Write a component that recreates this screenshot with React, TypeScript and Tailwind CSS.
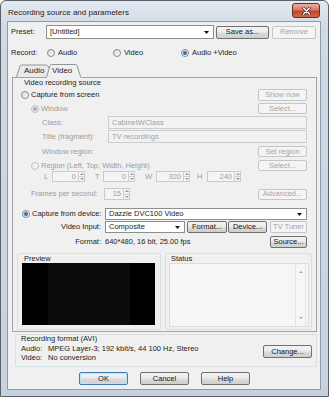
import type { ReactNode } from "react"

const btnFace = "border-[#707070] bg-[linear-gradient(#f3f3f3,#ebebeb_48%,#dcdcdc_52%,#cfcfcf)] text-[#151515]"

function Btn({ w, h = "h-[13px]", children, disabled = false, def = false }: { w: string; h?: string; children: ReactNode; disabled?: boolean; def?: boolean }) {
  let look = btnFace
  if (disabled) look = "border-[#c3c6c9] bg-[#f4f4f4] text-[#a6a6a6]"
  if (def) look = "border-[#3c7fb1] bg-[linear-gradient(#f3f3f3,#ebebeb_48%,#dcdcdc_52%,#cfcfcf)] text-[#151515] shadow-[inset_0_0_0_1px_#bfe3f7]"
  return (
    <div className={`${w} ${h} shrink-0 flex items-center justify-center rounded-[2px] border leading-none ${look}`}>
      {children}
    </div>
  )
}

function Radio({ checked = false, disabled = false }: { checked?: boolean; disabled?: boolean }) {
  return (
    <span
      className={`w-[8px] h-[8px] shrink-0 rounded-full border flex items-center justify-center ${
        disabled ? "border-[#bdbdbd] bg-[#f2f2f2]" : "border-[#8b8b8b] bg-[linear-gradient(135deg,#d9d9d9,#fbfbfb)]"
      }`}
    >
      {checked && <span className={`w-[4px] h-[4px] rounded-full ${disabled ? "bg-[#a9a9a9]" : "bg-[#2c6fb7]"}`} />}
    </span>
  )
}

function Arrow({ up = false, color = "#9a9a9a" }: { up?: boolean; color?: string }) {
  return (
    <svg width="4" height="2" viewBox="0 0 4 2">
      <path d={up ? "M0 2L2 0L4 2Z" : "M0 0H4L2 2Z"} fill={color} />
    </svg>
  )
}

function Spin({ w, h = "h-[11px]", value }: { w: string; h?: string; value: string }) {
  return (
    <div className={`${w} ${h} shrink-0 flex border border-[#c9cbcd] bg-[#f4f4f4]`}>
      <span className="flex-1 flex items-center justify-end pr-[2px] text-[#a0a0a0]">{value}</span>
      <span className="w-[6px] flex flex-col border-l border-[#cfd1d3]">
        <span className="flex-1 flex items-center justify-center border-b border-[#cfd1d3]">
          <Arrow up />
        </span>
        <span className="flex-1 flex items-center justify-center">
          <Arrow />
        </span>
      </span>
    </div>
  )
}

function Combo({ cls, text }: { cls: string; text: string }) {
  return (
    <div className={`${cls} shrink-0 flex items-center border border-[#8f8f8f] bg-white pl-[3px] pr-[4px]`}>
      <span className="flex-1">{text}</span>
      <svg width="5" height="3" viewBox="0 0 5 3">
        <path d="M0 0H5L2.5 3Z" fill="#111" />
      </svg>
    </div>
  )
}

function Field({ text }: { text: string }) {
  return (
    <div className="flex-1 h-[13px] flex items-center border border-[#cbcdcf] bg-[#f2f2f2] pl-[3px] text-[#a2a2a2]">
      {text}
    </div>
  )
}

const dim = "text-[#9c9c9c]"

export default function App() {
  return (
    <div className="w-[329px] h-[397px] flex flex-col border border-[#5c6169] rounded-t-[6px] bg-[linear-gradient(#e2e9f1,#d0dae5_28px,#c8d2de)] pl-[6px] pr-[7px] pb-[6px] font-['Liberation_Sans',Arial,sans-serif] text-[#1c1c1c]">
      {/* title bar */}
      <div className="h-[20px] flex items-start">
        <span className="mt-[8px] ml-[1px] text-[8px] leading-none text-[#1e1e1e]">Recording source and parameters</span>
        <div className="ml-auto mr-[1px] mt-[2px] w-[28px] h-[15px] rounded-[3px] border border-[#6b2c20] bg-[linear-gradient(#eab0a2,#d87a63_45%,#c2442a_55%,#d06a4f)] flex items-center justify-center">
          <svg width="9" height="8" viewBox="0 0 9 8">
            <path d="M1.5 1L7.5 7M7.5 1L1.5 7" stroke="#3a1810" strokeWidth="2.6" strokeLinecap="round" />
            <path d="M1.5 1L7.5 7M7.5 1L1.5 7" stroke="#ffffff" strokeWidth="1.5" strokeLinecap="round" />
          </svg>
        </div>
      </div>

      {/* client area */}
      <div className="w-[314px] h-[369px] border border-[#8d9cab] bg-[#f0f0f0] pl-[3px] pt-[3px] flex flex-col text-[7.5px] leading-none">
        <div className="h-[14px] flex items-center">
          <span className="w-[35px]">Preset:</span>
          <Combo cls="w-[168px] h-[14px]" text="[Untitled]" />
          <div className="ml-[2px]">
            <Btn w="w-[53px]">Save as...</Btn>
          </div>
          <div className="ml-[3px]">
            <Btn w="w-[44px]" disabled>Remove</Btn>
          </div>
        </div>

        <div className="mt-[8px] h-[12px] flex items-center">
          <span className="w-[36px]">Record:</span>
          <span className="w-[66px] flex items-center gap-[3px]">
            <Radio />
            Audio
          </span>
          <span className="w-[68px] flex items-center gap-[3px]">
            <Radio />
            Video
          </span>
          <span className="flex items-center gap-[3px]">
            <Radio checked />
            Audio +Video
          </span>
        </div>

        {/* tabs */}
        <div className="mt-[5px] ml-[5px] relative z-10 -mb-px w-[66px] h-[14px] flex items-center text-[8px]">
          <svg className="absolute inset-0" width="66" height="14" viewBox="0 0 66 14">
            <path d="M0 13L4 1.5L30 1.5L35 13Z" fill="#e9e9e9" />
            <path d="M0.5 13L4.2 1.8Q4.6 1 5.5 1L30 1Q32 1 33.2 4.6" fill="none" stroke="#8f959c" />
            <path d="M30 14L34 1Q34.4 0.5 35.5 0.5L59 0.5Q60.6 0.5 61.2 2L65 14Z" fill="#f0f0f0" />
            <path d="M30.5 13.5L34.2 1.2Q34.6 0.5 35.5 0.5L59 0.5Q60.6 0.5 61.2 2L64.8 13.5" fill="none" stroke="#8f959c" />
          </svg>
          <span className="relative w-[36px] pl-[8px]">Audio</span>
          <span className="relative">Video</span>
        </div>

        {/* video page */}
        <div className="ml-[1px] w-[305px] h-[255px] border border-[#9fa5ac] flex flex-col pr-[9px]">
          <div className="h-[10px] flex items-center pl-[11px]">Video recording source</div>

          <div className="h-[13px] flex items-center pl-[8px]">
            <Radio />
            <span className="ml-[2px]">Capture from screen</span>
            <div className="ml-auto">
              <Btn w="w-[49px]" h="h-[12px]" disabled>Show now</Btn>
            </div>
          </div>

          <div className={`mt-[2px] h-[11px] flex items-center pl-[18px] ${dim}`}>
            <Radio checked disabled />
            <span className="ml-[2px]">Window</span>
            <div className="ml-auto">
              <Btn w="w-[49px]" h="h-[11px]" disabled>Select...</Btn>
            </div>
          </div>

          <div className="mt-[2px] h-[13px] flex items-center pl-[29px]">
            <span className={`w-[66px] ${dim}`}>Class:</span>
            <Field text="CabinetWClass" />
          </div>

          <div className="mt-[1px] h-[13px] flex items-center pl-[29px]">
            <span className={`w-[66px] ${dim}`}>Title (fragment):</span>
            <Field text="TV recordings" />
          </div>

          <div className="mt-[3px] h-[11px] flex items-center pl-[29px]">
            <span className={dim}>Window region:</span>
            <div className="ml-auto">
              <Btn w="w-[49px]" h="h-[11px]" disabled>Set region</Btn>
            </div>
          </div>

          <div className={`mt-[3px] h-[11px] flex items-center pl-[18px] ${dim}`}>
            <Radio disabled />
            <span className="ml-[2px]">Region (Left, Top, Width, Height)</span>
            <div className="ml-auto">
              <Btn w="w-[49px]" h="h-[11px]" disabled>Select...</Btn>
            </div>
          </div>

          <div className={`h-[11px] flex items-center pl-[31px] ${dim}`}>
            <span className="w-[8px]">L</span>
            <Spin w="w-[33px]" value="0" />
            <span className="ml-[10px] w-[8px]">T</span>
            <Spin w="w-[32px]" value="0" />
            <span className="ml-[10px] w-[11px]">W</span>
            <Spin w="w-[34px]" value="320" />
            <span className="ml-[7px] w-[10px]">H</span>
            <Spin w="w-[34px]" value="240" />
          </div>

          <div className="mt-[6px] h-[12px] flex items-center pl-[18px]">
            <span className={`w-[73px] ${dim}`}>Frames per second:</span>
            <Spin w="w-[26px]" h="h-[12px]" value="15" />
            <div className="ml-auto">
              <Btn w="w-[49px]" h="h-[11px]" disabled>Advanced...</Btn>
            </div>
          </div>

          <div className="mt-[8px] h-[12px] flex items-center pl-[9px]">
            <Radio checked />
            <span className="ml-[2px] w-[73px]">Capture from device:</span>
            <Combo cls="flex-1 h-[12px]" text="Dazzle DVC100 Video" />
          </div>

          <div className="mt-[1px] h-[12px] flex items-center">
            <span className="w-[88px] text-right">Video Input:</span>
            <div className="ml-[4px]">
              <Combo cls="w-[80px] h-[12px]" text="Composite" />
            </div>
            <div className="ml-[2px]">
              <Btn w="w-[40px]" h="h-[12px]">Format...</Btn>
            </div>
            <div className="ml-[1px]">
              <Btn w="w-[39px]" h="h-[12px]">Device...</Btn>
            </div>
            <div className="ml-[3px]">
              <Btn w="w-[37px]" h="h-[12px]" disabled>TV Tuner</Btn>
            </div>
          </div>

          <div className="mt-[3px] h-[12px] flex items-center">
            <span className="w-[88px] text-right">Format:</span>
            <span className="ml-[4px]">640*480, 16 bit, 25.00 fps</span>
            <div className="ml-auto">
              <Btn w="w-[37px]" h="h-[12px]">Source...</Btn>
            </div>
          </div>

          <div className="mt-[5px] h-[77px] flex pl-[4px] -mr-[5px]">
            <div className="w-[144px] h-full border border-[#d5dfe5] rounded-[2px] flex flex-col">
              <div className="h-[9px] pl-[6px] flex items-center">Preview</div>
              <div className="ml-[4px] w-[133px] h-[62px] bg-black flex justify-center">
                <div className="w-[82px] h-full bg-[#0c0c0c]" />
              </div>
            </div>
            <div className="ml-[4px] flex-1 h-full border border-[#d5dfe5] rounded-[2px] flex flex-col">
              <div className="h-[9px] pl-[5px] flex items-center">Status</div>
              <div className="ml-[3px] mr-[2px] h-[64px] border border-[#dcdcdc] bg-[#f6f6f6] flex justify-end">
                <div className="w-[11px] mr-[2px] border-x border-[#e3e3e3] flex flex-col items-center justify-between py-[7px]">
                  <Arrow up color="#a8a8a8" />
                  <Arrow color="#a8a8a8" />
                </div>
              </div>
            </div>
          </div>
        </div>

        {/* recording format */}
        <div className="mt-[2px] ml-[4px] w-[302px] h-[33px] border border-[#d5dfe5] rounded-[2px] flex flex-col">
          <div className="h-[7px] pl-[5px] flex items-center">Recording format (AVI)</div>
          <div className="mt-[3px] flex items-start">
            <div className="pl-[5px] flex flex-col gap-[1px]">
              <div className="h-[8px] flex items-center">
                <span className="w-[27px]">Audio:</span>
                <span>MPEG Layer-3; 192 kbit/s, 44 100 Hz, Stereo</span>
              </div>
              <div className="h-[8px] flex items-center">
                <span className="w-[27px]">Video:</span>
                <span>No conversion</span>
              </div>
            </div>
            <div className="ml-auto mr-[4px]">
              <Btn w="w-[49px]">Change...</Btn>
            </div>
          </div>
        </div>

        <div className="mt-[5px] ml-[68px] flex gap-[12px]">
          <Btn w="w-[49px]" def>OK</Btn>
          <Btn w="w-[49px]">Cancel</Btn>
          <Btn w="w-[49px]">Help</Btn>
        </div>
      </div>
    </div>
  )
}
